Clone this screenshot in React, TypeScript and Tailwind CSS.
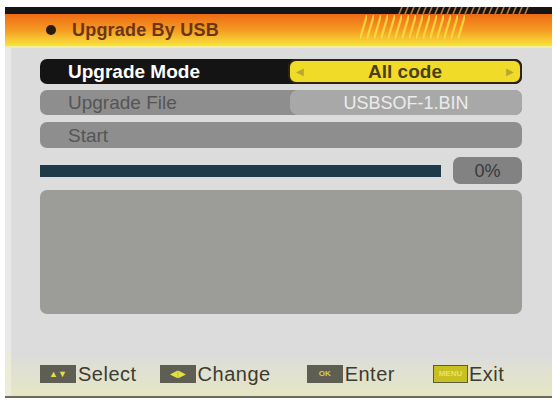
import React from "react";

const font = { fontFamily: '"Liberation Sans", Arial, sans-serif' };

function KeyBadge({ children, filled }: { children: React.ReactNode; filled?: boolean }) {
  return (
    <div
      className={
        filled
          ? "flex h-[18px] w-[35px] items-center justify-center border border-[#5c5c40] bg-[#c8c020]"
          : "flex h-[18px] w-[36px] items-center justify-center bg-[#5e5e52]"
      }
    >
      {children}
    </div>
  );
}

export default function App() {
  return (
    <div className="h-[401px] w-[557px] overflow-hidden bg-white pl-[5px] pr-[5px] pt-[7px]" style={font}>
      <div className="flex h-[391px] flex-col border-b-2 border-[#6c6c5c] bg-[#dcdcdc]">
        {/* top black bar */}
        <div className="relative h-[7px] bg-[#151515]">
          <svg className="absolute left-[392px] top-0" width="132" height="7" viewBox="0 0 132 7">
            <defs>
              <pattern id="hb" width="6" height="7" patternUnits="userSpaceOnUse">
                <path d="M2 7 L5 0" stroke="#b87a40" strokeWidth="1.6" />
              </pattern>
            </defs>
            <rect width="132" height="7" fill="url(#hb)" />
          </svg>
        </div>
        {/* header */}
        <div className="relative flex h-[32px] items-center bg-gradient-to-b from-[#ee6a14] via-[#f49a22] to-[#f6e53c] pl-[41px]">
          <svg className="absolute left-[355px] top-[1px]" width="105" height="24" viewBox="0 0 105 24">
            <defs>
              <pattern id="hy" width="7" height="24" patternUnits="userSpaceOnUse">
                <path d="M0 24 L7 0" stroke="#f8e040" strokeWidth="2.2" />
              </pattern>
            </defs>
            <rect width="105" height="24" fill="url(#hy)" opacity="0.85" />
          </svg>
          <div className="h-[10px] w-[10px] rounded-full bg-[#2a1a10]" />
          <div className="relative ml-[16px] text-[18px] font-bold leading-none tracking-[0.2px] text-[#6a3618]">Upgrade By USB</div>
        </div>
        <div className="h-[2px] bg-[#f4ee98]" />

        {/* content */}
        <div className="flex flex-1 border-l-[6px] border-[#e9e9e9]">
          <div className="flex flex-1 flex-col pl-[29px] pr-[30px] pt-[11px]">
            {/* row 1 */}
            <div className="flex h-[25px] items-center rounded-[7px] bg-[#141414]">
              <div className="flex-1 pl-[28px] text-[19px] font-bold leading-none text-white">Upgrade Mode</div>
              <div className="flex h-[25px] w-[234px] items-center justify-between rounded-[8px] border-2 border-[#2a2410] bg-[#f0dc28] px-[6px]">
                <span className="text-[10px] leading-none text-[#b8a830]">◀</span>
                <span className="text-[19px] font-bold leading-none text-[#4a4018]">All code</span>
                <span className="text-[10px] leading-none text-[#b8a830]">▶</span>
              </div>
            </div>
            {/* row 2 */}
            <div className="mt-[6px] flex h-[25px] items-center rounded-[7px] bg-[#8e8e8e]">
              <div className="flex-1 pl-[28px] text-[19px] leading-none text-[#555555]">Upgrade File</div>
              <div className="flex h-[25px] w-[232px] items-center justify-center rounded-[8px] bg-[#a8a8a8] text-[18px] leading-none text-[#ececec]">
                USBSOF-1.BIN
              </div>
            </div>
            {/* row 3 */}
            <div className="mt-[7px] flex h-[26px] items-center rounded-[7px] bg-[#8e8e8e] pl-[28px] text-[19px] leading-none text-[#555555]">
              Start
            </div>
            {/* progress */}
            <div className="mt-[9px] flex items-center">
              <div className="h-[12px] w-[401px] bg-[#1f3a48]" />
              <div className="ml-[12px] flex h-[27px] flex-1 items-center justify-center rounded-[7px] bg-[#828282] text-[18px] leading-none text-[#3a3a3a]">
                0%
              </div>
            </div>
            {/* big box */}
            <div className="mt-[6px] h-[124px] rounded-[7px] bg-[#9c9c98]" />
          </div>
        </div>

        {/* footer */}
        <div className="flex h-[42px] items-center border-l-[6px] border-[#ececd8] bg-gradient-to-b from-[#dcdcdc] to-[#e6e6c4] pb-[2px] pl-[29px] text-[20px] leading-none tracking-[0.5px] text-[#3c3c30]">
          <KeyBadge>
            <span className="text-[9px] leading-none tracking-normal text-[#e8e040]">▲▼</span>
          </KeyBadge>
          <span className="ml-[2px]">Select</span>
          <div className="ml-[23px]">
            <KeyBadge>
              <span className="text-[10px] leading-none tracking-normal text-[#e8e040]">◀▶</span>
            </KeyBadge>
          </div>
          <span className="ml-[2px]">Change</span>
          <div className="ml-[36px]">
            <KeyBadge>
              <span className="text-[8px] font-bold leading-none tracking-normal text-[#d8d040]">OK</span>
            </KeyBadge>
          </div>
          <span className="ml-[2px]">Enter</span>
          <div className="ml-[38px]">
            <KeyBadge filled>
              <span className="text-[8px] font-bold leading-none tracking-normal text-[#e8e070]">MENU</span>
            </KeyBadge>
          </div>
          <span className="ml-[1px]">Exit</span>
        </div>
      </div>
    </div>
  );
}
